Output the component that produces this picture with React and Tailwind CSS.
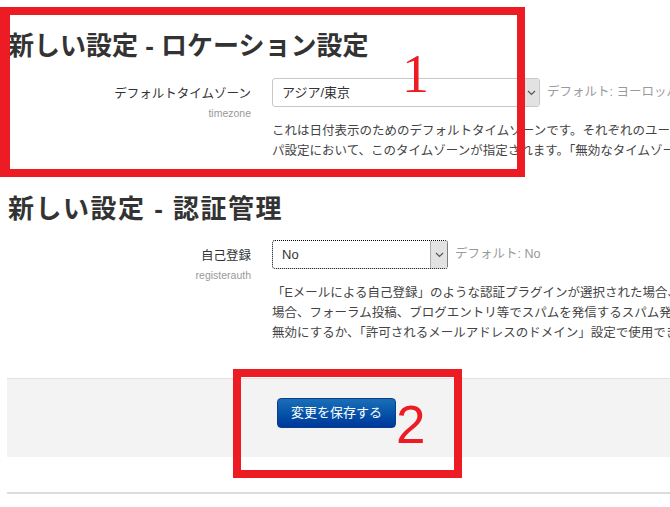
import React from 'react';

const Chevron = () => (
  <svg width="9" height="6" viewBox="0 0 9 6" fill="none">
    <path d="M1 1l3.5 3.5L8 1" stroke="#555" strokeWidth="1.2" />
  </svg>
);

function FakeSelect({ value, width, focused }) {
  return (
    <div
      className={`flex shrink-0 h-[29px] items-stretch bg-white rounded-[3px] ${
        focused ? 'border border-dotted border-black' : 'border border-[#c8c8c8]'
      }`}
      style={{ width }}
    >
      <div className="flex-1 flex items-center pl-[9px] text-[13px] text-[#333]">{value}</div>
      <div className="w-[17px] flex items-center justify-center bg-[#e2e2e2] border-l border-[#adadad] rounded-r-[2px]">
        <Chevron />
      </div>
    </div>
  );
}

function SettingRow({ label, name, value, width, focused, def, lines }) {
  return (
    <div className="flex">
      <div className="w-[243px] shrink-0 text-right pt-[8px]">
        <div className="text-[12.5px] leading-[16px] text-[#333]">{label}</div>
        <div className="text-[10.5px] leading-[14px] mt-[4px] text-[#999]">{name}</div>
      </div>
      <div className="ml-[21px] flex-1 min-w-0">
        <div className="flex items-center">
          <FakeSelect value={value} width={width} focused={focused} />
          <span className="ml-[7px] text-[12.5px] text-[#9a9a9a] whitespace-nowrap">デフォルト: {def}</span>
        </div>
        <div className="mt-[14px] text-[12.5px] leading-[20px] text-[#444] whitespace-nowrap">
          {lines.map((l) => (
            <div key={l}>{l}</div>
          ))}
        </div>
      </div>
    </div>
  );
}

export default function App() {
  return (
    <div className="relative w-[670px] h-[507px] overflow-hidden bg-white text-[#333] font-['Liberation_Sans','Noto_Sans_CJK_JP',sans-serif]">
      <div className="pl-[8px] pt-[28px]">
        <h2 className="text-[26px] font-bold leading-[36px] text-[#333]">新しい設定 - ロケーション設定</h2>
        <div className="mt-[14px]">
          <SettingRow
            label="デフォルトタイムゾーン"
            name="timezone"
            value="アジア/東京"
            width={268}
            def="ヨーロッパ/ロンドン"
            lines={[
              'これは日付表示のためのデフォルトタイムゾーンです。それぞれのユーザのタイムゾーンはプロファイルで設定できます。ヨーロッ',
              'パ設定において、このタイムゾーンが指定されます。「無効なタイムゾーン」が指定された場合、サーバのタイムゾーンが使用されます。',
            ]}
          />
        </div>

        <h2 className="mt-[30px] text-[26px] font-bold leading-[36px] tracking-[1.5px] text-[#333]">新しい設定 - 認証管理</h2>
        <div className="mt-[13px]">
          <SettingRow
            label="自己登録"
            name="registerauth"
            value="No"
            width={176}
            focused
            def="No"
            lines={[
              '「Eメールによる自己登録」のような認証プラグインが選択された場合、ユーザは自分でアカウントを作成できます。この',
              '場合、フォーラム投稿、ブログエントリ等でスパムを発信するスパム発信者にアカウントを作成される可能性があります。この機能を',
              '無効にするか、「許可されるメールアドレスのドメイン」設定で使用できるドメインを制限してください。',
            ]}
          />
        </div>
      </div>

      <div className="ml-[7px] mt-[35px] h-[79px] bg-[#f3f3f3] border-t border-[#e2e2e2] pl-[270px] pt-[19px]">
        <button className="h-[30px] w-[119px] rounded-[4px] border border-[#0a3d8a] bg-gradient-to-b from-[#1a6fb8] to-[#00379a] text-white text-[13px]">
          変更を保存する
        </button>
      </div>

      <div className="ml-[7px] mt-[35px] h-[2px] bg-[#dcdcdc]" />

      {/* annotations */}
      <div className="absolute left-0 top-[7px] w-[525px] h-[170px] border-[8px] border-l-[10px] border-[#ed1c24]" />
      <div className="absolute left-[402px] top-[47px] text-[54px] leading-none text-[#ed1c24] font-['Liberation_Serif',serif]">1</div>
      <div className="absolute left-[233px] top-[369px] w-[229px] h-[109px] border-[8px] border-[#ed1c24]" />
      <div className="absolute left-[396px] top-[398px] text-[53px] leading-none text-[#ed1c24] font-['Liberation_Sans',sans-serif]">2</div>
    </div>
  );
}
